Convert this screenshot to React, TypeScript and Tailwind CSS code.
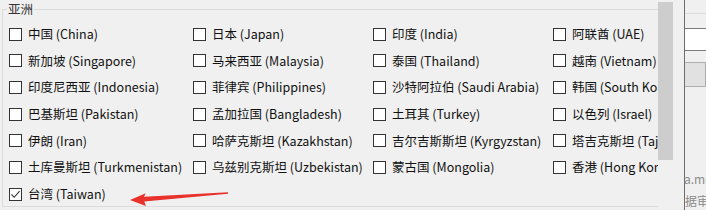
import React from "react";

type Country = { label: string; checked?: boolean };

const countries: Country[] = [
  { label: "中国 (China)" },
  { label: "日本 (Japan)" },
  { label: "印度 (India)" },
  { label: "阿联酋 (UAE)" },
  { label: "新加坡 (Singapore)" },
  { label: "马来西亚 (Malaysia)" },
  { label: "泰国 (Thailand)" },
  { label: "越南 (Vietnam)" },
  { label: "印度尼西亚 (Indonesia)" },
  { label: "菲律宾 (Philippines)" },
  { label: "沙特阿拉伯 (Saudi Arabia)" },
  { label: "韩国 (South Korea)" },
  { label: "巴基斯坦 (Pakistan)" },
  { label: "孟加拉国 (Bangladesh)" },
  { label: "土耳其 (Turkey)" },
  { label: "以色列 (Israel)" },
  { label: "伊朗 (Iran)" },
  { label: "哈萨克斯坦 (Kazakhstan)" },
  { label: "吉尔吉斯斯坦 (Kyrgyzstan)" },
  { label: "塔吉克斯坦 (Tajikistan)" },
  { label: "土库曼斯坦 (Turkmenistan)" },
  { label: "乌兹别克斯坦 (Uzbekistan)" },
  { label: "蒙古国 (Mongolia)" },
  { label: "香港 (Hong Kong)" },
  { label: "台湾 (Taiwan)", checked: true },
];

function Check({ item }: { item: Country }) {
  return (
    <div className="flex items-center gap-[6px] whitespace-nowrap">
      <span className="flex h-[13px] w-[13px] flex-none items-center justify-center border border-[#333333] bg-white">
        {item.checked && (
          <svg width="11" height="11" viewBox="0 0 11 11">
            <path d="M1.5 5.5 L4.2 8.3 L9.6 2.2" fill="none" stroke="#333" strokeWidth="1.1" />
          </svg>
        )}
      </span>
      <span className="text-[#111111]">{item.label}</span>
    </div>
  );
}

export default function App() {
  return (
    <div
      className="relative flex h-[210px] w-[706px] overflow-hidden bg-[#f0f0f0] text-[12.5px]"
      style={{ fontFamily: '"Noto Sans CJK SC", "Noto Sans", sans-serif' }}
    >
      {/* scrolled group box, clipped by the scrollbar */}
      <div className="h-full w-[658px] flex-none overflow-hidden pl-[2px]">
        <fieldset className="h-[207px] w-[740px] border border-[#dcdcdc] pl-[6px]">
          <legend className="-ml-[2px] px-[1px] leading-[18px] text-[#333333]">亚洲</legend>
          <div className="grid grid-cols-[184px_180px_180px_180px] auto-rows-[26.67px] pt-[3px]">
            {countries.map((c) => (
              <Check key={c.label} item={c} />
            ))}
          </div>
        </fieldset>
      </div>

      <div className="h-full w-[15px] flex-none">
        <div className="mt-[2px] h-[158px] bg-[#cdcdcd]" />
      </div>
      <div className="w-[11px] flex-none" />
      <div className="h-full w-px flex-none bg-[#6e6e6e]" />

      <div className="flex-1 overflow-hidden text-[12px]">
        <div className="mt-[13px] border-t border-[#dcdcdc]" />
        <div className="mt-[14px] h-[23px] border-y border-[#7a7a7a] bg-white" />
        <div className="mt-[11px] h-[25px] border border-l-0 border-[#adadad] bg-[#e1e1e1]" />
        <div className="-ml-[7px] mt-[84px] whitespace-nowrap leading-[16px] text-[#8a8a8a]">va.me</div>
        <div className="mt-[6px] whitespace-nowrap leading-[16px] text-[#8a8a8a]">据审</div>
      </div>

      <svg className="pointer-events-none absolute left-0 top-0" width="706" height="210">
        <polygon
          points="130,200 145.6,193.2 144.1,196.7 228,192.3 228,193.7 144.3,201.6 145.9,206 "
          fill="#e8322b"
        />
      </svg>
    </div>
  );
}
